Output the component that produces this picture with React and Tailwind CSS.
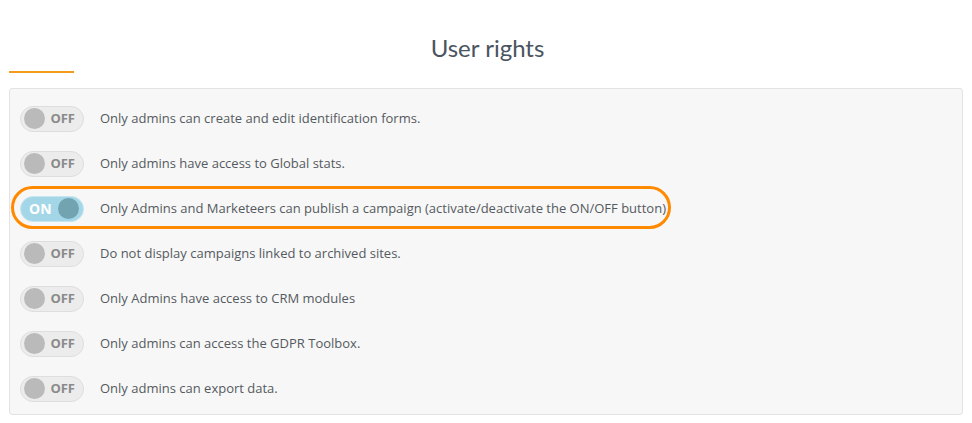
import React from "react";

const rows = [
  { on: false, text: "Only admins can create and edit identification forms." },
  { on: false, text: "Only admins have access to Global stats." },
  { on: true, text: "Only Admins and Marketeers can publish a campaign (activate/deactivate the ON/OFF button)", highlight: true },
  { on: false, text: "Do not display campaigns linked to archived sites." },
  { on: false, text: "Only Admins have access to CRM modules" },
  { on: false, text: "Only admins can access the GDPR Toolbox." },
  { on: false, text: "Only admins can export data." },
];

function Toggle({ on }) {
  if (on) {
    return (
      <div className="flex items-center justify-between w-[64px] h-[26px] rounded-full bg-[#a3d7e8] border border-[#c5e5ef] pl-[8px] pr-[4px] shrink-0">
        <span className="text-white font-bold text-[14px] leading-none">ON</span>
        <span className="w-[21px] h-[21px] rounded-full bg-[#72a3b0]"></span>
      </div>
    );
  }
  return (
    <div className="flex items-center justify-between w-[64px] h-[26px] rounded-full bg-[#ececec] border border-[#dedede] pl-[3px] pr-[8px] shrink-0">
      <span className="w-[21px] h-[21px] rounded-full bg-[#bababa]"></span>
      <span className="text-[#8a8a8a] font-bold text-[13px] leading-none">OFF</span>
    </div>
  );
}

export default function App() {
  return (
    <div className="w-[972px] h-[423px] bg-white px-[9px] pt-[32px]" style={{ fontFamily: '"Open Sans", "Liberation Sans", sans-serif' }}>
      <h1 className="text-center text-[24px] leading-[31px] text-[#4a545e] pl-[3px]" style={{ fontFamily: 'Lato, "Open Sans", sans-serif' }}>
        User rights
      </h1>
      <div className="mt-[8px] w-[65px] h-[2px] bg-[#f39a1a]"></div>
      <div className="mt-[15px] w-[954px] border border-[#e3e3e3] rounded-[3px] bg-[#f7f7f7] pt-[7px] pb-[3px] pl-[10px]">
        {rows.map((r, i) => (
          <div key={i} className="relative flex items-center h-[45px] gap-[16px]">
            {r.highlight && (
              <div className="absolute left-[-9px] top-[0px] w-[660px] h-[43px] rounded-full border-[3px] border-[#ff8a00]"></div>
            )}
            <Toggle on={r.on} />
            <span className="text-[13px] text-[#555a60]">{r.text}</span>
          </div>
        ))}
      </div>
    </div>
  );
}
